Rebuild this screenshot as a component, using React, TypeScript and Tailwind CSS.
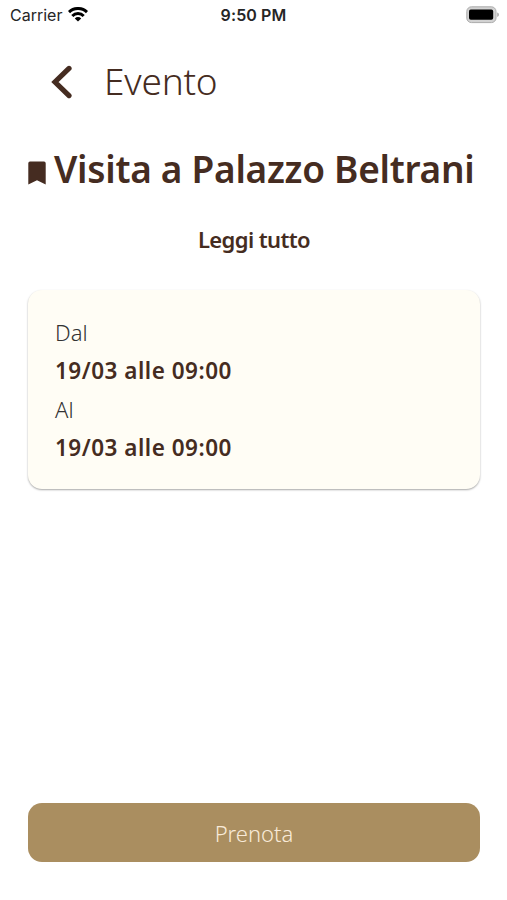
import type { ReactNode } from "react";

function WifiIcon() {
  return (
    <svg width="20" height="15" viewBox="0 0 20 15" fill="none" stroke="#000" strokeWidth="3">
      <path d="M1 5.1a13 13 0 0 1 18 0" />
      <path d="M4.3 9a8 8 0 0 1 11.4 0" />
      <path d="M10 14.6 6.8 11.4a4.6 4.6 0 0 1 6.4 0Z" fill="#000" stroke="none" />
    </svg>
  );
}

function BatteryIcon() {
  return (
    <svg width="34" height="18" viewBox="0 0 34 18">
      <rect x="0.8" y="0.8" width="29.2" height="15.8" rx="4.6" fill="#d2d2d2" stroke="#acacac" />
      <rect x="3" y="3.6" width="24.2" height="10.2" rx="1.8" fill="#000" />
      <path d="M31.2 6.5q1.8 .6 1.8 2.2t-1.8 2.2Z" fill="#acacac" />
    </svg>
  );
}

function StatusBar() {
  return (
    <div className="grid grid-cols-3 items-center h-[29px] pl-[10px] pr-[7px] font-['Inter'] text-[16px] text-[#262626]">
      <div className="flex items-center gap-[6px]">
        <span>Carrier</span>
        <WifiIcon />
      </div>
      <span className="-ml-[3px] text-center font-semibold tracking-[0.1px]">9:50 PM</span>
      <div className="flex justify-end">
        <BatteryIcon />
      </div>
    </div>
  );
}

function DateRow({ label, children }: { label: string; children: ReactNode }) {
  return (
    <div>
      <dt className="text-[22px] leading-[37px] font-light text-[#333]">{label}</dt>
      <dd className="text-[22.5px] leading-[40px] font-semibold tracking-[0.5px] text-[#452c21]">{children}</dd>
    </div>
  );
}

export default function App() {
  return (
    <div className="flex flex-col h-[900px] bg-white font-['Noto_Sans',sans-serif] text-[#452c21] overflow-hidden whitespace-nowrap">
      <StatusBar />
      <header className="flex items-center h-[105px] pl-[51px] gap-[32px]">
        <svg width="21" height="34" viewBox="0 0 21 34" fill="none" stroke="#452c21" strokeWidth="5.2" strokeLinecap="round">
          <path d="M18 3.4 4 17 18 30.6" />
        </svg>
        <span className="pb-[2px] text-[37px] font-light tracking-[-0.2px]">Evento</span>
      </header>
      <main className="flex flex-col flex-1 pl-7 pr-[27px]">
        <div className="flex items-center h-[70px]">
          <svg width="18" height="24" viewBox="0 0 18 24" className="mt-2 shrink-0">
            <path d="M2 0.5h14q1.7 0 1.7 1.7V23.5L9 19.2 0.3 23.5V2.2Q0.3 0.5 2 0.5Z" fill="#452c21" />
          </svg>
          <h1 className="ml-2 text-[37px] font-semibold tracking-[-0.28px]">Visita a Palazzo Beltrani</h1>
        </div>
        <button className="mt-[15px] h-[40px] self-center text-[22px] font-semibold tracking-[-0.6px]">
          Leggi tutto
        </button>
        <dl className="mt-[31px] h-[199px] rounded-[14px] bg-[#fffdf5] px-[27px] pt-[24px] shadow-[0_1px_2px_rgba(0,0,0,0.35)]">
          <DateRow label="Dal">19/03 alle 09:00</DateRow>
          <DateRow label="Al">19/03 alle 09:00</DateRow>
        </dl>
        <button className="mt-auto mb-[38px] h-[59px] rounded-[14px] bg-[#aa8e60] pt-[2px] text-[22px] font-light text-[#f8ead8]">
          Prenota
        </button>
      </main>
    </div>
  );
}
